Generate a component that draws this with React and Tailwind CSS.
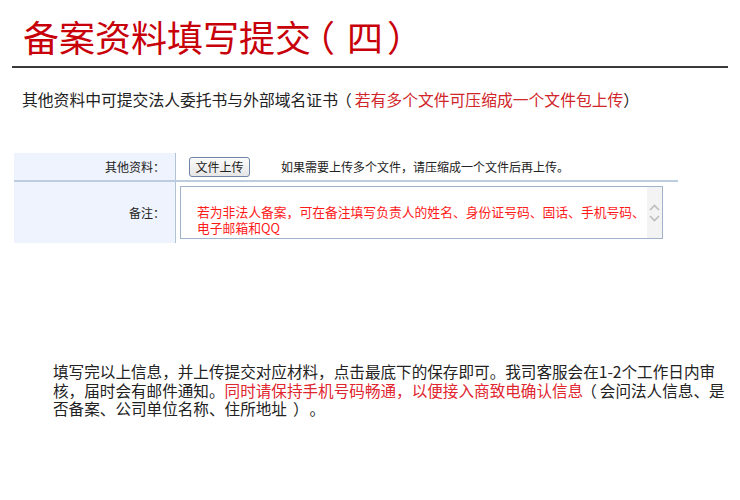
export default function App() {
  return (
    <div className="h-[500px] w-[740px] bg-white font-['Noto_Sans_CJK_SC',sans-serif] text-[#222] [text-spacing-trim:space-all]">
      <div className="mx-3 border-b-2 border-[#3a3a3a] pt-[13px] pb-[6px] pl-[11px]">
        <h1 className="text-[36px] leading-[47px] text-[#c8000a] whitespace-nowrap">
          备案资料填写提交<span className="ml-[-12px] pr-[12px]">（</span>四<span className="ml-[4px]">）</span>
        </h1>
      </div>

      <p className="mt-[20px] pl-[22px] text-[15.8px] leading-[24px] whitespace-nowrap">
        其他资料中可提交法人委托书与外部域名证书<span className="ml-[-2px] pr-[3px]">（</span>
        <span className="text-[#d0262a]">若有多个文件可压缩成一个文件包上传</span>
        <span>）</span>
      </p>

      <div className="mt-[41px] ml-[14px] w-[664px] text-[12px]">
        <div className="flex h-[29px] border-b-2 border-[#bdcde0]">
          <div className="flex w-[162px] items-center justify-end border-r border-[#b3c3d6] bg-[#eef3fd] pr-[10px]">
            其他资料：
          </div>
          <div className="flex flex-1 items-center">
            <button className="ml-[13px] h-[20px] w-[61px] rounded-[3px] border border-[#6f87a5] bg-gradient-to-b from-[#fbfbfb] to-[#e6e6e6] text-[12px] leading-none">
              文件上传
            </button>
            <span className="ml-[31px]">如果需要上传多个文件，请压缩成一个文件后再上传。</span>
          </div>
        </div>
        <div className="flex h-[61px]">
          <div className="flex w-[162px] items-center justify-end border-r border-[#b3c3d6] bg-[#eef3fd] pr-[10px]">
            备注：
          </div>
          <div className="flex-1 pt-[4px] pl-[4px]">
            <div className="flex h-[53px] w-[483px] border border-[#9fb3cb]">
              <div className="flex-1 pt-[17px] pl-[16px] text-[12.8px] leading-[16px] text-[#ff1a1a]">
                若为非法人备案，可在备注填写负责人的姓名、身份证号码、固话、手机号码、电子邮箱和QQ
              </div>
              <div className="flex w-[15px] flex-col items-center justify-center bg-[#f3f3f3] text-[#bdbdbd]">
                <svg width="11" height="7" viewBox="0 0 11 7" fill="none" stroke="currentColor" strokeWidth="1.6">
                  <path d="M1 6 L5.5 1.5 L10 6" />
                </svg>
                <svg className="mt-[4px]" width="11" height="7" viewBox="0 0 11 7" fill="none" stroke="currentColor" strokeWidth="1.6">
                  <path d="M1 1 L5.5 5.5 L10 1" />
                </svg>
              </div>
            </div>
          </div>
        </div>
      </div>

      <div className="mt-[119px] pl-[53px] text-[15.6px] leading-[18.5px] whitespace-nowrap">
        <div>填写完以上信息，并上传提交对应材料，点击最底下的保存即可。我司客服会在1-2个工作日内审</div>
        <div>
          核，届时会有邮件通知。
          <span className="text-[#e0262f]">同时请保持手机号码畅通，以便接入商致电确认信息</span>
          <span className="ml-[-2px] pr-[3px]">（</span>会问法人信息、是
        </div>
        <div>
          否备案、公司单位名称、住所地址<span className="ml-[6px] pr-[1px]">）</span>。
        </div>
      </div>
    </div>
  );
}
